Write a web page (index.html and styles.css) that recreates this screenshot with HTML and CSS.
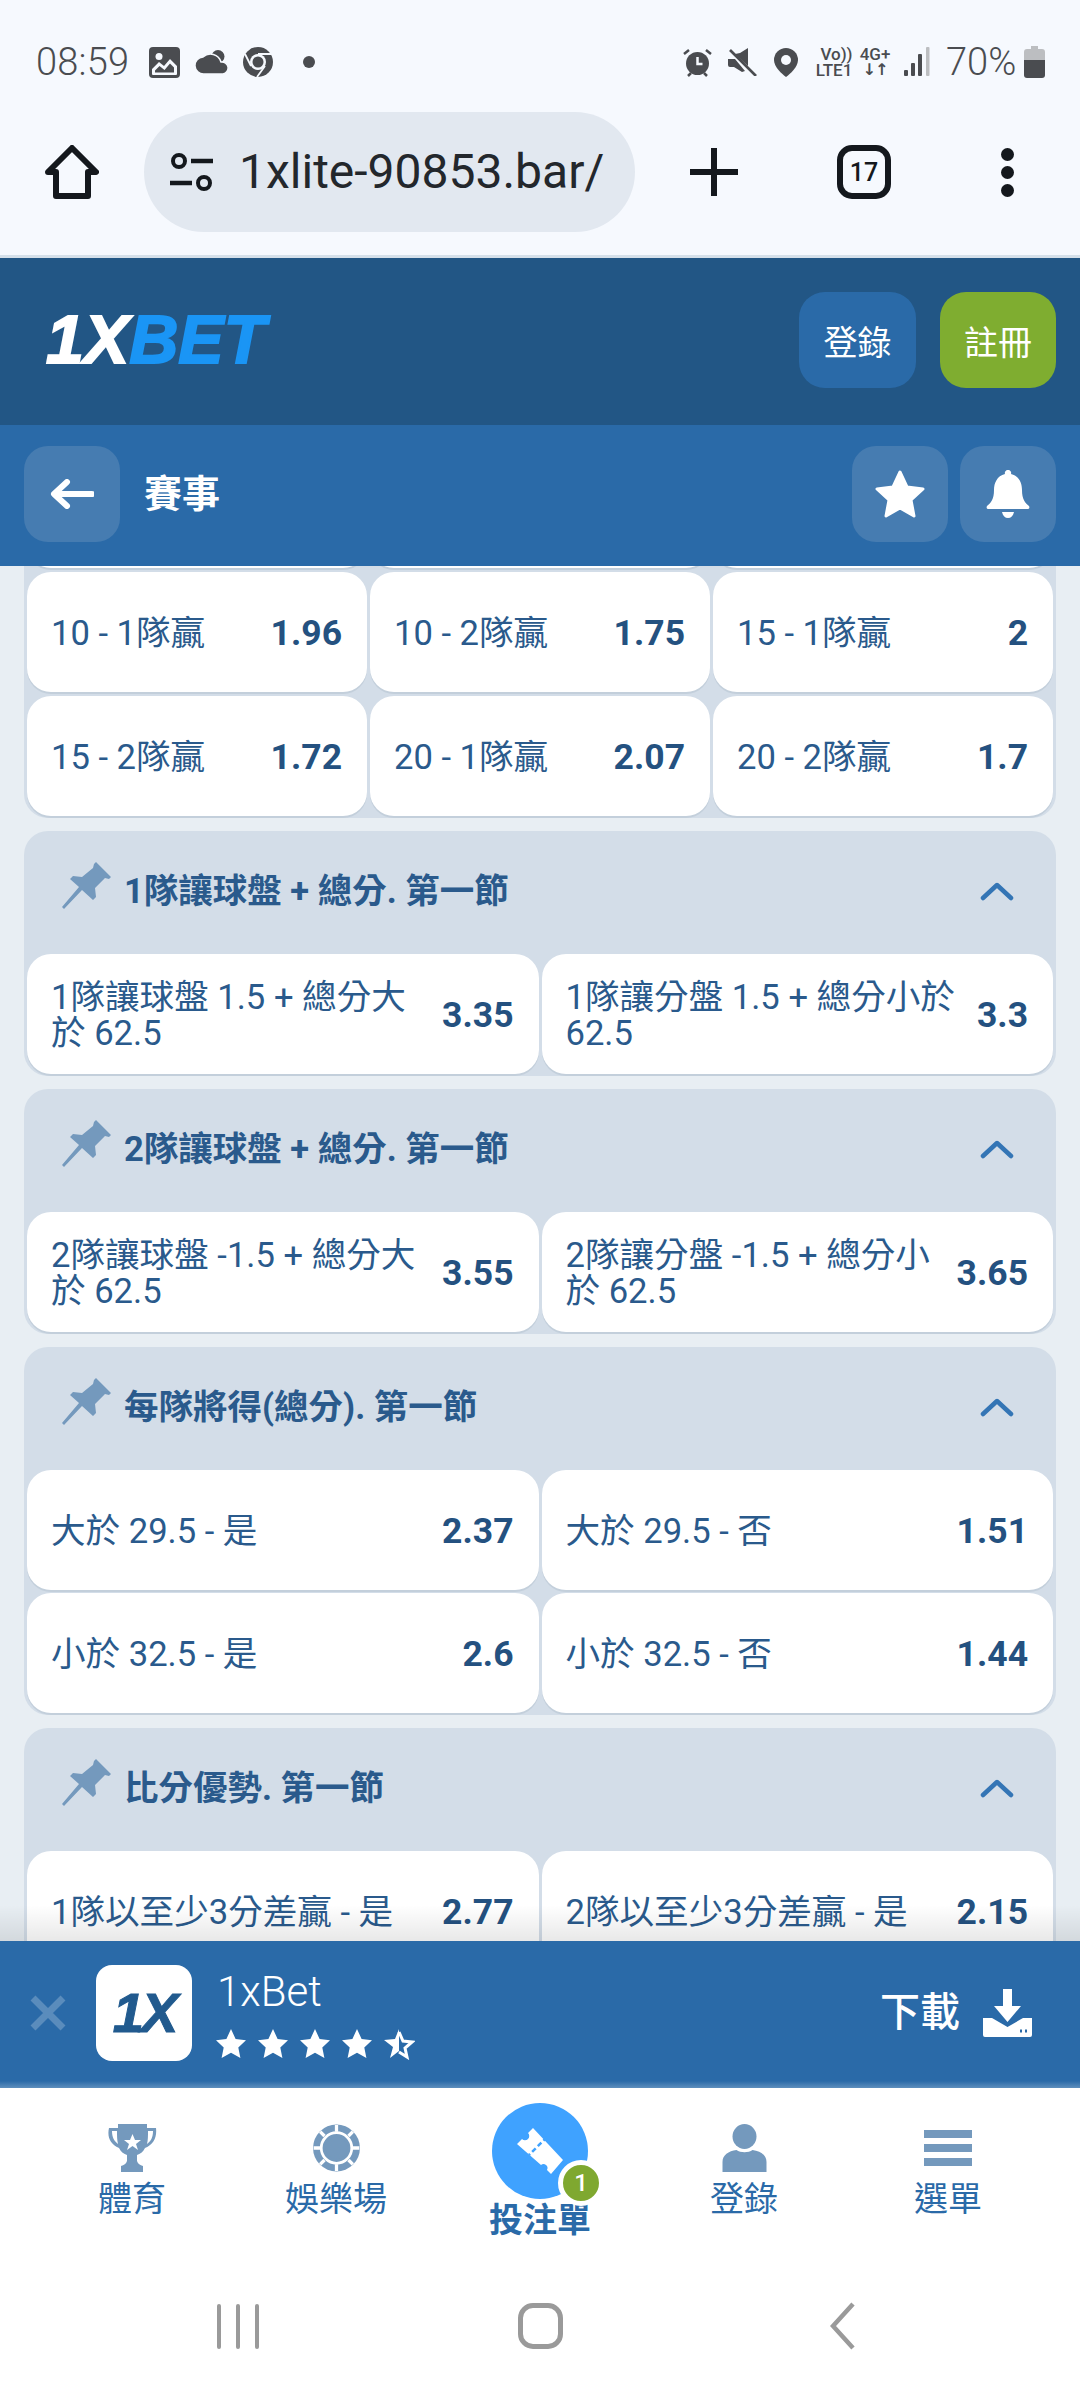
FILE: index.html
```html
<!DOCTYPE html>
<html lang="zh-Hant">
<head>
<meta charset="utf-8">
<title>1xBet</title>
<link rel="stylesheet" href="styles.css">
</head>
<body>
<div class="page">
  <div class="status">
    <span class="time">08:59</span>
    <svg class="si si-img" viewBox="0 0 31 31"><rect width="31" height="31" rx="4" fill="#4a4c50"/><path fill="#f6f9fe" d="M3 27v-5l7-7 5 4 6-7 7 7v8a1 1 0 0 1-1 1H4a1 1 0 0 1-1-1z"/><path fill="#4a4c50" d="M6 25.500v-2l4.500-4.500 5 4 5.500-6.500 4 4v5z"/><circle cx="10" cy="9.500" r="3.500" fill="#f6f9fe"/></svg>
    <svg class="si si-cloud" viewBox="0 0 34 24"><circle cx="23" cy="6.500" r="6.500" fill="#4a4c50"/><path fill="#4a4c50" stroke="#f6f9fe" stroke-width="1.500" d="M9 24a8.500 8.500 0 0 1-1-17 11 11 0 0 1 18 5 6 6 0 0 1 2 12z"/></svg>
    <svg class="si si-chrome" viewBox="0 0 30 30"><circle cx="15" cy="15" r="15" fill="#4a4c50"/><circle cx="15" cy="15" r="8" fill="#f6f9fe"/><circle cx="15" cy="15" r="5.500" fill="#4a4c50"/><path stroke="#f6f9fe" stroke-width="1.800" fill="none" d="M15 7h14M8 19 2 7M22 19 14 30"/></svg>
    <span class="status-dot"></span>
    <span class="status-space"></span>
    <svg class="si si-alarm" viewBox="0 0 29 29"><circle cx="14.500" cy="15.500" r="11.500" fill="#4a4c50"/><path d="M14.500 9v7h5" stroke="#f6f9fe" stroke-width="2.500" fill="none"/><path d="M1 6l5-4M28 6l-5-4M5 28l3-3M24 28l-3-3" stroke="#4a4c50" stroke-width="2.500" fill="none"/></svg>
    <svg class="si si-mute" viewBox="0 0 29 28"><path fill="#4a4c50" d="M20 0v18L7 6l5-1zM0 11h7l10 12-3 1-8-5H2a2 2 0 0 1-2-2z"/><path d="M2 2l26 26" stroke="#4a4c50" stroke-width="2.600"/></svg>
    <svg class="si si-pin" viewBox="0 0 24 29"><path fill="#4a4c50" d="M12 0a12 12 0 0 1 12 12c0 7-8 14-12 17C8 26 0 19 0 12A12 12 0 0 1 12 0z"/><circle cx="12" cy="12" r="5" fill="#f6f9fe"/></svg>
    <span class="volte"><span class="volte-top">Vo))</span><span>LTE1</span></span>
    <span class="net"><span>4G+</span><span class="net-arrows">↓↑</span></span>
    <svg class="si si-signal" viewBox="0 0 26 30"><rect x="0" y="23" width="4" height="6" rx="1" fill="#4a4c50"/><rect x="7" y="16" width="4" height="13" rx="1" fill="#4a4c50"/><rect x="14" y="7" width="4" height="22" rx="1" fill="#4a4c50"/><rect x="22" y="0" width="3.500" height="29" rx="1" fill="#bcbec1"/></svg>
    <span class="batt-pct">70%</span>
    <svg class="si si-batt" viewBox="0 0 21 32"><path fill="#bcbec1" d="M7 0h7v3h4a3 3 0 0 1 3 3v10H0V6a3 3 0 0 1 3-3h4z"/><path fill="#4a4c50" d="M0 14h21v15a3 3 0 0 1-3 3H3a3 3 0 0 1-3-3z"/></svg>
  </div>

  <div class="toolbar">
    <svg class="tb-home" viewBox="0 0 54 54"><path d="M27 3 51 27H43V51H11V27H3z" fill="none" stroke="#14181d" stroke-width="6" stroke-linejoin="round"/></svg>
    <div class="pill">
      <svg class="tune" viewBox="0 0 43 38"><circle cx="9" cy="8" r="6" fill="none" stroke="#14181d" stroke-width="4"/><path d="M21 8h22M0 30h22" stroke="#14181d" stroke-width="4.500"/><circle cx="34" cy="30" r="6" fill="none" stroke="#14181d" stroke-width="4"/></svg>
      <span class="url">1xlite-90853.bar/</span>
    </div>
    <svg class="tb-plus" viewBox="0 0 48 48"><path d="M24 0v48M0 24h48" stroke="#14181d" stroke-width="6" stroke-linecap="round"/></svg>
    <span class="tab-count">17</span>
    <span class="dots"><i></i><i></i><i></i></span>
  </div>

  <header class="brandbar">
    <span class="logo"><span class="logo-1x">1X</span><span class="logo-bet">BET</span></span>
    <span class="brand-space"></span>
    <span class="btn btn-login">登錄</span>
    <span class="btn btn-reg">註冊</span>
  </header>

  <div class="subbar">
    <span class="sq"><svg class="ic-back" viewBox="0 0 44 30"><path d="M17 3 4 15l13 12M5 15h37" fill="none" stroke="#fff" stroke-width="6" stroke-linecap="round" stroke-linejoin="round"/></svg></span>
    <span class="sub-title">賽事</span>
    <span class="sq sq-star"><svg class="ic-star" viewBox="0 0 50 48"><path fill="#fff" stroke="#fff" stroke-width="3" stroke-linejoin="round" d="M25 2l7 15 16 2-12 11 3 16-14-8-14 8 3-16L2 19l16-2z"/></svg></span>
    <span class="sq"><svg class="ic-bell" viewBox="0 0 44 48"><path fill="#fff" d="M22 0a3 3 0 0 1 3 4c8 2 11 9 11 16 0 9 3 13 7 16 1 2 0 3-2 3H3c-2 0-3-1-2-3 4-3 7-7 7-16 0-7 3-14 11-16a3 3 0 0 1 3-4z"/><path fill="#fff" d="M16 42h12c-1 4-3 6-6 6s-5-2-6-6z"/></svg></span>
  </div>

  <main class="list">
    <section class="group group-scrolled">
      <div class="cells cells-3">
        <div class="cell"></div><div class="cell"></div><div class="cell"></div>
        <div class="cell"><span class="label">10 - 1隊贏</span><b class="odd">1.96</b></div>
        <div class="cell"><span class="label">10 - 2隊贏</span><b class="odd">1.75</b></div>
        <div class="cell"><span class="label">15 - 1隊贏</span><b class="odd">2</b></div>
        <div class="cell"><span class="label">15 - 2隊贏</span><b class="odd">1.72</b></div>
        <div class="cell"><span class="label">20 - 1隊贏</span><b class="odd">2.07</b></div>
        <div class="cell"><span class="label">20 - 2隊贏</span><b class="odd">1.7</b></div>
      </div>
    </section>

    <section class="group">
      <div class="group-head">
        <svg class="pin" viewBox="0 0 49 47"><use href="#pin-shape"/></svg>
        <h2 class="group-title">1隊讓球盤 + 總分. 第一節</h2>
        <svg class="chev" viewBox="0 0 34 20"><path d="M3 17 17 4l14 13" fill="none" stroke="#3475b5" stroke-width="4.500" stroke-linecap="round" stroke-linejoin="round"/></svg>
      </div>
      <div class="cells cells-2">
        <div class="cell"><span class="label">1隊讓球盤 1.5 + 總分大於 62.5</span><b class="odd">3.35</b></div>
        <div class="cell"><span class="label">1隊讓分盤 1.5 + 總分小於 62.5</span><b class="odd">3.3</b></div>
      </div>
    </section>

    <section class="group">
      <div class="group-head">
        <svg class="pin" viewBox="0 0 49 47"><use href="#pin-shape"/></svg>
        <h2 class="group-title">2隊讓球盤 + 總分. 第一節</h2>
        <svg class="chev" viewBox="0 0 34 20"><path d="M3 17 17 4l14 13" fill="none" stroke="#3475b5" stroke-width="4.500" stroke-linecap="round" stroke-linejoin="round"/></svg>
      </div>
      <div class="cells cells-2">
        <div class="cell"><span class="label">2隊讓球盤 -1.5 + 總分大於 62.5</span><b class="odd">3.55</b></div>
        <div class="cell"><span class="label">2隊讓分盤 -1.5 + 總分小於 62.5</span><b class="odd">3.65</b></div>
      </div>
    </section>

    <section class="group">
      <div class="group-head">
        <svg class="pin" viewBox="0 0 49 47"><use href="#pin-shape"/></svg>
        <h2 class="group-title">每隊將得(總分). 第一節</h2>
        <svg class="chev" viewBox="0 0 34 20"><path d="M3 17 17 4l14 13" fill="none" stroke="#3475b5" stroke-width="4.500" stroke-linecap="round" stroke-linejoin="round"/></svg>
      </div>
      <div class="cells cells-2">
        <div class="cell"><span class="label">大於 29.5 - 是</span><b class="odd">2.37</b></div>
        <div class="cell"><span class="label">大於 29.5 - 否</span><b class="odd">1.51</b></div>
        <div class="cell"><span class="label">小於 32.5 - 是</span><b class="odd">2.6</b></div>
        <div class="cell"><span class="label">小於 32.5 - 否</span><b class="odd">1.44</b></div>
      </div>
    </section>

    <section class="group">
      <div class="group-head">
        <svg class="pin" viewBox="0 0 49 47"><use href="#pin-shape"/></svg>
        <h2 class="group-title">比分優勢. 第一節</h2>
        <svg class="chev" viewBox="0 0 34 20"><path d="M3 17 17 4l14 13" fill="none" stroke="#3475b5" stroke-width="4.500" stroke-linecap="round" stroke-linejoin="round"/></svg>
      </div>
      <div class="cells cells-2">
        <div class="cell"><span class="label">1隊以至少3分差贏 - 是</span><b class="odd">2.77</b></div>
        <div class="cell"><span class="label">2隊以至少3分差贏 - 是</span><b class="odd">2.15</b></div>
      </div>
    </section>
  </main>

  <div class="banner">
    <svg class="ban-x" viewBox="0 0 38 36"><path d="M4 3l30 30M34 3 4 33" stroke="#5a8cbc" stroke-width="7"/></svg>
    <span class="app-icon"><span class="app-1x">1X</span></span>
    <div class="app-info">
      <span class="app-name">1xBet</span>
      <span class="stars">
        <svg class="star" viewBox="0 0 32 32"><use href="#star-full"/></svg>
        <svg class="star" viewBox="0 0 32 32"><use href="#star-full"/></svg>
        <svg class="star" viewBox="0 0 32 32"><use href="#star-full"/></svg>
        <svg class="star" viewBox="0 0 32 32"><use href="#star-full"/></svg>
        <svg class="star" viewBox="0 0 32 32"><path fill="#fff" d="M16 1v22l-9 7 3-11-9-7 11-1z"/><path fill="none" stroke="#fff" stroke-width="3" d="M16 4l4 9 9 1-7 6 2 9-8-5"/></svg>
      </span>
    </div>
    <span class="ban-space"></span>
    <span class="ban-dl">下載</span>
    <svg class="ban-dl-ic" viewBox="0 0 49 48"><path fill="#fff" d="M20 0h9v17h9L24.500 33 11 17h9z"/><path fill="#fff" d="M0 29h9l15.500 9L40 29h9v17a2 2 0 0 1-2 2H2a2 2 0 0 1-2-2z"/><path d="M37 42h2M42 42h2" stroke="#2a6aa8" stroke-width="3"/></svg>
  </div>

  <nav class="tabs">
    <a class="tab">
      <svg class="tab-ic" viewBox="0 0 49 48"><path fill="#7499bd" d="M10 0h29v4h9c1 9-2 16-11 20-2 4-5 6-8 7v6c1 3 3 4 6 5v6H13v-6c3-1 5-2 6-5v-6c-3-1-6-3-8-7C2 20-1 13 1 4h9zM4 7c0 6 2 10 6 13-1-4-1-8-1-13zm41 0h-5c0 5 0 9-1 13 4-3 6-7 6-13z"/><path fill="#fff" d="M24.500 10l2.500 6h6l-5 4 2 6-5.500-4-5.500 4 2-6-5-4h6z"/></svg>
      <span class="tab-label">體育</span>
    </a>
    <a class="tab">
      <svg class="tab-ic" viewBox="0 0 44 44"><circle cx="22" cy="22" r="21.500" fill="#7499bd"/><circle cx="22" cy="22" r="14" fill="none" stroke="#fff" stroke-width="2.500"/><circle cx="22" cy="22" r="10" fill="#7499bd"/><path d="M22 1v6M22 37v6M1 22h6M37 22h6M7 7l4 4M33 33l4 4M37 7l-4 4M11 33l-4 4" stroke="#fff" stroke-width="3"/></svg>
      <span class="tab-label">娛樂場</span>
    </a>
    <a class="tab tab-main">
      <span class="tab-circle">
        <svg class="ticket" viewBox="0 0 46 46"><path fill="#fff" d="M16 0l30 32-12 14-4-4a4 4 0 0 0-6-5L0 16l5-5a4 4 0 0 0 6-6z"/><path d="M27 6 9 24" stroke="#3fa2ff" stroke-width="2.500" stroke-dasharray="5 3" transform="translate(3 3)"/></svg>
        <span class="badge">1</span>
      </span>
      <span class="tab-label tab-label-main">投注單</span>
    </a>
    <a class="tab">
      <svg class="tab-ic" viewBox="0 0 44 48"><ellipse cx="22" cy="12.500" rx="12" ry="12.500" fill="#7499bd"/><path fill="#7499bd" d="M0 48V38c0-7 6-11 14-12 4 3 12 3 16 0 8 1 14 5 14 12v10a400 400 0 0 1-44 0z"/></svg>
      <span class="tab-label">登錄</span>
    </a>
    <a class="tab">
      <span class="burger"><i></i><i></i><i></i></span>
      <span class="tab-label">選單</span>
    </a>
  </nav>

  <div class="sysnav">
    <span class="sys-recents"><i></i><i></i><i></i></span>
    <span class="sys-home"></span>
    <svg class="sys-back" viewBox="0 0 25 48"><path d="M23 2 3 24l20 22" fill="none" stroke="#9a9a9a" stroke-width="4.500"/></svg>
  </div>
</div>

<svg class="defs" width="0" height="0">
  <defs>
    <g id="pin-shape"><path fill="#7499bd" d="M32 2l2-2 15 15-2 2-4-1-10 10 1 9-3 3-11-10L2 47l-2-2 17-20-9-8 3-3 9 1L31 6z"/></g>
    <path id="star-full" fill="#fff" d="M16 1l4.600 10 10.400 1.200-7.700 7.200 2.100 10.600L16 24.700 6.600 30l2.100-10.600L1 12.200 11.400 11z"/>
  </defs>
</svg>
</body>
</html>
```

FILE: styles.css
```css
* { box-sizing: border-box; margin: 0; padding: 0; }
html, body { width: 1080px; height: 2400px; overflow: hidden; }
body { background: #fff; font-family: Roboto, "Noto Sans CJK TC", sans-serif; color: #2a5a8c; }
svg { display: block; flex: none; }
.defs { position: absolute; }
.page { width: 1080px; height: 2400px; display: flex; flex-direction: column; }

/* Android status bar */
.status { height: 89px; background: #f6f9fe; display: flex; align-items: center; padding: 35px 35px 0 36px; flex: none; color: #4a4c50; }
.time { font-size: 38px; font-weight: 300; line-height: 54px; width: 113px; letter-spacing: .2px; }
.si-img { width: 31px; height: 31px; }
.si-cloud { width: 34px; height: 24px; margin-left: 15px; }
.si-chrome { width: 30px; height: 30px; margin-left: 14px; }
.status-dot { width: 12px; height: 12px; border-radius: 50%; background: #4a4c50; margin-left: 30px; }
.status-space { flex: 1; }
.si-alarm { width: 29px; height: 29px; }
.si-mute { width: 29px; height: 28px; margin-left: 16px; }
.si-pin { width: 24px; height: 29px; margin-left: 17px; }
.volte, .net { display: flex; flex-direction: column; align-items: center; font-size: 17px; font-weight: 500; line-height: 16px; }
.volte { width: 36px; margin-left: 18px; }
.volte-top { margin-left: 5px; }
.net { width: 32px; margin-left: 7px; }
.net-arrows { font-family: "DejaVu Sans", sans-serif; font-size: 16px; font-weight: 700; letter-spacing: -1px; }
.si-signal { width: 26px; height: 30px; margin-left: 13px; }
.batt-pct { font-size: 38px; font-weight: 300; line-height: 54px; margin-left: 16px; width: 70px; }
.si-batt { width: 21px; height: 32px; margin-left: 8px; }

/* Browser toolbar */
.toolbar { height: 169px; background: #f6f9fe; border-bottom: 3px solid #d5e0ea; display: flex; align-items: center; padding: 0 0 0 45px; flex: none; }
.tb-home { width: 54px; height: 54px; }
.pill { width: 491px; height: 120px; border-radius: 60px; background: #e2e8f0; margin-left: 45px; display: flex; align-items: center; padding-left: 26px; }
.tune { width: 43px; height: 38px; }
.url { font-size: 48px; line-height: 56px; color: #23272c; width: 372px; margin-left: 26px; white-space: nowrap; overflow: hidden; }
.tb-plus { width: 48px; height: 48px; margin-left: 55px; }
.tab-count { width: 54px; height: 54px; border: 6px solid #14181d; border-radius: 15px; margin-left: 99px; font-size: 25px; font-weight: 500; color: #14181d; display: flex; align-items: center; justify-content: center; }
.dots { display: flex; flex-direction: column; gap: 5px; margin-left: 110px; }
.dots i { width: 13px; height: 13px; border-radius: 50%; background: #14181d; display: block; }

/* Site brand bar */
.brandbar { height: 167px; background: #225685; display: flex; align-items: flex-start; padding: 34px 24px 0 46px; flex: none; }
.logo { font-family: "Liberation Sans", sans-serif; font-size: 68px; font-weight: 700; font-style: italic; line-height: 64px; letter-spacing: 0; white-space: nowrap; margin-top: 15px; -webkit-text-stroke: 2px; }
.logo-1x { color: #fff; }
.logo-bet { color: #1a95f5; }
.brand-space { flex: 1; }
.btn { height: 96px; border-radius: 26px; display: flex; align-items: center; justify-content: center; font-size: 34px; color: #fff; }
.btn-login { width: 117px; background: #2a6aa8; }
.btn-reg { width: 116px; background: #7fad30; margin-left: 24px; }

/* Section bar */
.subbar { height: 141px; background: #2a6aa8; display: flex; align-items: flex-start; padding: 21px 24px 0; flex: none; }
.sq { width: 96px; height: 96px; border-radius: 24px; background: #467cb1; display: flex; align-items: center; justify-content: center; }
.sq-star { margin-left: auto; margin-right: 12px; }
.ic-back { width: 44px; height: 30px; }
.ic-star { width: 50px; height: 48px; }
.ic-bell { width: 44px; height: 48px; }
.sub-title { font-size: 38px; font-weight: 700; color: #fff; line-height: 96px; margin-left: 24px; }

/* Bets list */
.list { flex: 1; min-height: 0; background: #e8eef3; overflow: hidden; padding: 0 24px; position: relative; display: flex; flex-direction: column; gap: 13px; }
.list::after { content: ""; position: absolute; left: 0; right: 0; bottom: 0; height: 36px; background: linear-gradient(to bottom, rgba(0,0,0,0), rgba(0,0,0,.09)); }
.group { background: #d3dde8; border-radius: 24px; padding: 0 3px 2px; flex: none; }
.group-scrolled { margin-top: -118px; border-radius: 0 0 24px 24px; }
.group-head { height: 123px; display: flex; align-items: center; padding: 0 24px 3px 35px; }
.pin { width: 49px; height: 47px; margin-bottom: 12px; }
.group-title { font-size: 34.500px; font-weight: 700; color: #2a5a8c; margin-left: 13px; flex: 1; line-height: 48px; }
.chev { width: 34px; height: 20px; margin-right: 15px; }
.cells { display: grid; gap: 4px 3px; }
.cells-2 { grid-template-columns: 1fr 1fr; row-gap: 3px; }
.cells-3 { grid-template-columns: 1fr 1fr 1fr; }
.cell { height: 120px; background: #fff; border-radius: 24px; box-shadow: 0 2px 0 #c3cfdb; display: flex; align-items: center; padding: 1px 25px 0 24px; gap: 10px; }
.label { flex: 1; min-width: 0; font-size: 34.600px; line-height: 36px; color: #2a5a8c; }
.odd { flex: none; font-size: 35.500px; font-weight: 700; color: #245180; line-height: 40px; }

/* App banner */
.banner { height: 147px; background: linear-gradient(to bottom, #2a6aa8 0, #2a6aa8 140px, #5f8fbd 147px); display: flex; align-items: center; padding: 0 48px 0 29px; flex: none; }
.ban-x { width: 38px; height: 36px; margin-bottom: 3px; }
.app-icon { width: 96px; height: 96px; background: #fff; border-radius: 16px; margin-left: 29px; display: flex; align-items: center; justify-content: center; margin-bottom: 4px; }
.app-1x { font-family: "Liberation Sans", sans-serif; font-size: 56px; font-weight: 700; font-style: italic; color: #215a8e; letter-spacing: -3px; line-height: 56px; -webkit-text-stroke: 1px; }
.app-info { margin-left: 25px; display: flex; flex-direction: column; gap: 13px; }
.app-name { font-size: 42px; font-weight: 300; color: #fff; line-height: 46px; }
.stars { display: flex; gap: 10px; margin-left: -2px; }
.star { width: 32px; height: 32px; }
.ban-space { flex: 1; }
.ban-dl { font-size: 40px; color: #fff; font-weight: 500; line-height: 48px; margin-bottom: 4px; }
.ban-dl-ic { width: 49px; height: 48px; margin-left: 23px; margin-bottom: 4px; }

/* Bottom tabs */
.tabs { height: 172px; background: #fff; display: grid; grid-template-columns: repeat(5, 204px); padding: 0 30px; flex: none; }
.tab { display: flex; flex-direction: column; align-items: center; padding-top: 36px; color: #2a6aa8; }
.tab-ic { height: 48px; width: 49px; }
.tab-label { font-size: 34px; line-height: 40px; margin-top: 7px; }
.tab-main { padding-top: 15px; }
.tab-circle { width: 96px; height: 96px; border-radius: 50%; background: #3fa2ff; position: relative; display: flex; align-items: center; justify-content: center; flex: none; }
.ticket { width: 46px; height: 46px; }
.badge { position: absolute; left: 66px; top: 57px; width: 46px; height: 46px; border-radius: 50%; background: #7fa830; border: 5px solid #fff; color: #fff; font-size: 24px; font-weight: 500; display: flex; align-items: center; justify-content: center; }
.tab-label-main { font-size: 34px; font-weight: 700; margin-top: 0; line-height: 42px; }
.burger { height: 48px; display: flex; flex-direction: column; justify-content: center; gap: 6px; }
.burger i { display: block; width: 48px; height: 8px; background: #7499bd; }

/* Android navigation */
.sysnav { height: 140px; flex: none; background: #fff; display: grid; grid-template-columns: repeat(3, 302px); justify-content: center; justify-items: center; align-items: center; padding-bottom: 8px; }
.sys-recents { display: flex; gap: 15px; }
.sys-recents i { display: block; width: 4px; height: 45px; background: #9a9a9a; border-radius: 2px; }
.sys-home { width: 45px; height: 46px; border: 5px solid #9a9a9a; border-radius: 15px; }
.sys-back { width: 25px; height: 48px; }
```
